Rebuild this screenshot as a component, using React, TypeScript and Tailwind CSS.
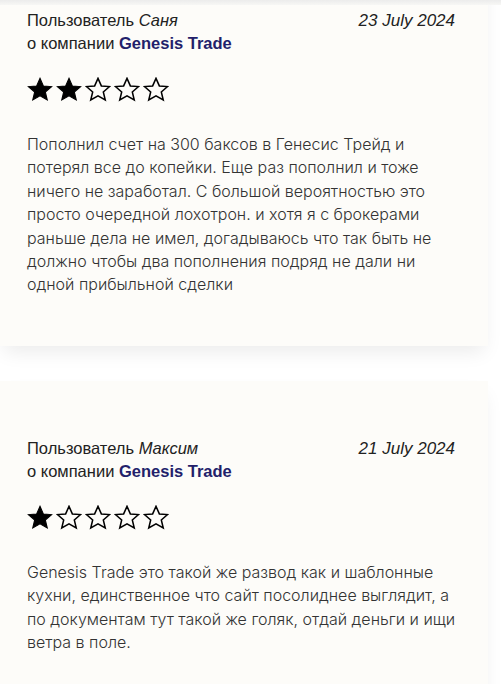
import React from "react"

type Review = {
  user: string
  date: string
  rating: number
  text: string
}

const reviews: Review[] = [
  {
    user: "Саня",
    date: "23 July 2024",
    rating: 2,
    text: "Пополнил счет на 300 баксов в Генесис Трейд и потерял все до копейки. Еще раз пополнил и тоже ничего не заработал. С большой вероятностью это просто очередной лохотрон. и хотя я с брокерами раньше дела не имел, догадываюсь что так быть не должно чтобы два пополнения подряд не дали ни одной прибыльной сделки",
  },
  {
    user: "Максим",
    date: "21 July 2024",
    rating: 1,
    text: "Genesis Trade это такой же развод как и шаблонные кухни, единственное что сайт посолиднее выглядит, а по документам тут такой же голяк, отдай деньги и ищи ветра в поле.",
  },
]

function Star({ filled }: { filled: boolean }) {
  return (
    <svg width="26" height="25" viewBox="0 0 24 23" className="block">
      <path
        d="M12 1.2l3.1 7 7.6.6-5.8 5 1.8 7.4L12 17.3l-6.7 3.9 1.8-7.4-5.8-5 7.6-.6z"
        fill={filled ? "#000" : "none"}
        stroke="#000"
        strokeWidth={filled ? 1 : 1.4}
        strokeLinejoin="miter"
      />
    </svg>
  )
}

function ReviewCard({ review, first }: { review: Review; first?: boolean }) {
  return (
    <div
      className={`bg-[#fdfcf9] pl-[27px] pr-[29px] pt-[56px] pb-[49px] shadow-[0_10px_18px_-4px_rgba(0,0,0,0.08)] ${
        first ? "-mt-[52px]" : ""
      }`}
    >
      {/* header */}
      <div className="flex justify-between pr-[4px] font-['Liberation_Sans',Arial,sans-serif] text-[16.5px] leading-[23px] text-[#222]">
        <div>
          <div>
            Пользователь <i>{review.user}</i>
          </div>
          <div>
            о компании <b className="text-[#231f6b]">Genesis Trade</b>
          </div>
        </div>
        <i className="text-[17px] text-[#222]">{review.date}</i>
      </div>

      {/* rating */}
      <div className="mt-[22px] flex gap-[3px]">
        {[0, 1, 2, 3, 4].map((i) => (
          <Star key={i} filled={i < review.rating} />
        ))}
      </div>

      {/* text */}
      <p className="mt-[31px] font-['Inter',sans-serif] text-[16px] font-light leading-[23.4px] text-[#333]">
        {review.text}
      </p>
    </div>
  )
}

export default function App() {
  return (
    <div className="min-h-screen overflow-hidden bg-white">
      <div className="relative z-10 h-[5px] bg-gradient-to-b from-[#ececec] to-[#f7f7f5]" />
      <div className="flex flex-col gap-[35px] pr-[13px]">
        {reviews.map((r, i) => (
          <ReviewCard key={r.user} review={r} first={i === 0} />
        ))}
      </div>
    </div>
  )
}
